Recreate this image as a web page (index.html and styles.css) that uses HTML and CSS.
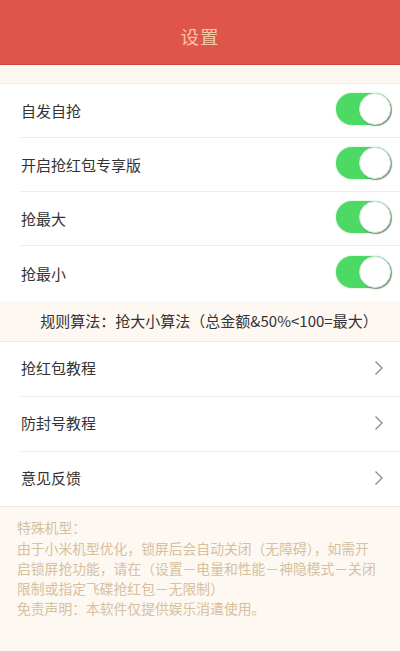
FILE: index.html
```html
<!DOCTYPE html>
<html lang="zh">
<head>
<meta charset="utf-8">
<title>设置</title>
<link rel="stylesheet" href="styles.css">
</head>
<body>
<div class="page">
  <header class="topbar"><span class="title">设置</span></header>
  <div class="spacer"></div>
  <section class="group">
    <div class="row"><span class="label">自发自抢</span><span class="switch"><span class="knob"></span></span></div>
    <div class="row"><span class="label">开启抢红包专享版</span><span class="switch"><span class="knob"></span></span></div>
    <div class="row"><span class="label">抢最大</span><span class="switch"><span class="knob"></span></span></div>
    <div class="row last"><span class="label">抢最小</span><span class="switch"><span class="knob"></span></span></div>
  </section>
  <div class="rule">规则算法：抢大小算法（总金额&amp;50%&lt;100=最大）</div>
  <section class="group links">
    <div class="row link"><span class="label">抢红包教程</span><svg class="chev" width="10" height="16" viewBox="0 0 10 16"><path d="M1.5 1.5 L8 8 L1.5 14.5" fill="none" stroke="#8a8a8a" stroke-width="1.3"/></svg></div>
    <div class="row link"><span class="label">防封号教程</span><svg class="chev" width="10" height="16" viewBox="0 0 10 16"><path d="M1.5 1.5 L8 8 L1.5 14.5" fill="none" stroke="#8a8a8a" stroke-width="1.3"/></svg></div>
    <div class="row link last"><span class="label">意见反馈</span><svg class="chev" width="10" height="16" viewBox="0 0 10 16"><path d="M1.5 1.5 L8 8 L1.5 14.5" fill="none" stroke="#8a8a8a" stroke-width="1.3"/></svg></div>
  </section>
  <footer class="notes">
    <p class="note-title">特殊机型：</p>
    <p class="note-body">由于小米机型优化，锁屏后会自动关闭（无障碍），如需开<br>启锁屏抢功能，请在（设置－电量和性能－神隐模式－关闭<br>限制或指定飞碟抢红包－无限制）</p>
    <p class="note-end">免责声明：本软件仅提供娱乐消遣使用。</p>
  </footer>
</div>
</body>
</html>
```
FILE: styles.css
```css
* { box-sizing: border-box; }
html, body { margin: 0; padding: 0; }
body {
  font-family: "Noto Sans CJK SC", "Noto Sans", sans-serif;
  background: #fdf8f2;
  width: 400px;
  height: 651px;
  overflow: hidden;
}
.page { display: flex; flex-direction: column; height: 651px; }
.topbar {
  height: 65px;
  background: #e0554b;
  border-bottom: 1px solid #c8473f;
  display: flex;
  align-items: center;
  justify-content: center;
  padding-top: 8px;
}
.title { color: #f6c6a4; font-size: 18.5px; letter-spacing: 1px; }
.spacer { height: 18px; background: #fdf8f2; }
.group {
  background: #fff;
  border-top: 1px solid #efebe6;
  padding-left: 20px;
}
.row {
  height: 54px;
  display: flex;
  align-items: center;
  justify-content: space-between;
  border-bottom: 1px solid #eeeeee;
  padding-right: 9px;
}
.row.last { border-bottom: none; height: 55px; }
.label { color: #333; font-size: 15px; padding-left: 1px; }
.switch {
  width: 55px;
  height: 32px;
  border-radius: 16px;
  background: #4cd964;
  position: relative;
  margin-top: -3px;
  box-shadow: 0 0 2px rgba(76, 217, 100, 0.5);
}
.knob {
  position: absolute;
  right: 0;
  top: 0;
  width: 32px;
  height: 32px;
  border-radius: 50%;
  background: #fff;
  border: 1px solid #d8e2da;
  box-shadow: 1px 1px 1px rgba(40, 70, 50, 0.55);
}
.rule {
  height: 40px;
  display: flex;
  align-items: center;
  justify-content: center;
  font-size: 15px;
  color: #333;
  background: #fdf8f2;
  padding-left: 18px;
  padding-bottom: 1px;
}
.links .row { height: 55px; padding-right: 16px; padding-bottom: 3px; }
.links .row.last { height: 54px; }
.notes {
  flex: 1;
  background: #fdf8f2;
  border-top: 1px solid #eee9e3;
  padding: 10px 4px 0 17px;
  color: #d6c0a0;
  font-size: 13.8px;
  line-height: 20px;
  white-space: nowrap;
}
.notes p { margin: 0; }
.note-title { margin-bottom: 1px !important; }
```
